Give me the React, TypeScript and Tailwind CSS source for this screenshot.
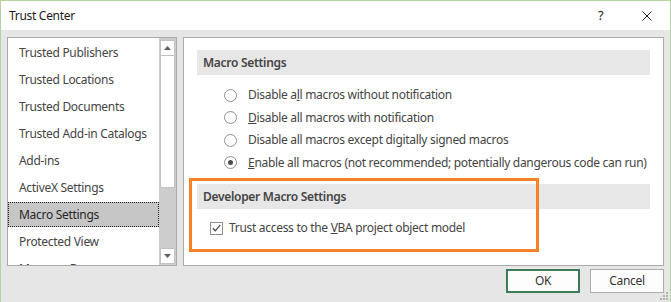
import React from "react";

const items = [
  "Trusted Publishers",
  "Trusted Locations",
  "Trusted Documents",
  "Trusted Add-in Catalogs",
  "Add-ins",
  "ActiveX Settings",
  "Macro Settings",
  "Protected View",
  "Message Bar",
];

function Radio({ checked }: { checked?: boolean }) {
  return (
    <span className="w-[13px] h-[13px] rounded-full border border-[#8f8f8f] bg-white flex items-center justify-center shrink-0">
      {checked && <span className="w-[5px] h-[5px] rounded-full bg-[#4d4d4d]" />}
    </span>
  );
}

function Tri({ down }: { down?: boolean }) {
  return (
    <svg width="7" height="4" viewBox="0 0 7 4">
      {down ? <path d="M0 0H7L3.5 4Z" fill="#606060" /> : <path d="M0 4H7L3.5 0Z" fill="#606060" />}
    </svg>
  );
}

export default function App() {
  return (
    <div className="relative w-[671px] h-[302px] flex flex-col overflow-hidden border-l border-r border-t border-[#b5d49d] bg-[#e6e6e6] text-[#444] font-['Noto_Sans',sans-serif] text-[12px] tracking-[-0.3px] leading-none whitespace-nowrap">
      {/* Title bar */}
      <div className="h-[29px] shrink-0 bg-white flex items-center pl-[8px] text-[#1a1a1a]">
        <span className="flex-1">Trust Center</span>
        <span className="w-[10px] text-[13px] mr-[34px]">?</span>
        <svg width="10" height="10" viewBox="0 0 10 10" className="mr-[18px]">
          <path d="M0.5 0.5L9.5 9.5M9.5 0.5L0.5 9.5" stroke="#1a1a1a" strokeWidth="1" />
        </svg>
      </div>

      {/* Body */}
      <div className="flex-1 flex flex-col px-[6px] pt-[7px]">
        <div className="flex gap-[6px] h-[229px]">
          {/* List */}
          <div className="w-[170px] border border-[#ababab] bg-white flex overflow-hidden">
            <div className="flex-1 pt-[1px] overflow-hidden">
              {items.map((it) => {
                const sel = it === "Macro Settings";
                return (
                  <div key={it} className="h-[27px] py-[1px]">
                    <div
                      className={
                        sel
                          ? "h-[25px] flex items-center pl-[10px] bg-[#c6c6c6] border border-dotted border-[#222] text-[#262626]"
                          : "h-[25px] flex items-center pl-[11px]"
                      }
                    >
                      {it}
                    </div>
                  </div>
                );
              })}
            </div>
            <div className="w-[17px] flex flex-col bg-[#cdcdcd] pt-[2px] pb-[1px] px-[1px]">
              <div className="h-[16px] bg-white border border-[#c2c2c2] flex items-center justify-center">
                <Tri />
              </div>
              <div className="h-[132px] bg-white border border-t-0 border-[#c2c2c2]" />
              <div className="flex-1" />
              <div className="h-[16px] bg-white border border-[#c2c2c2] flex items-center justify-center">
                <Tri down />
              </div>
            </div>
          </div>

          {/* Right panel */}
          <div className="flex-1 border border-[#ababab] bg-white pt-[12px] px-[13px]">
            <div className="h-[25px] bg-[#e7e7e7] flex items-center pl-[6px] font-semibold text-[#444]">
              Macro Settings
            </div>
            <div className="mt-[9px] flex flex-col">
              <div className="h-[22.5px] flex items-center pl-[27px] gap-[11px]">
                <Radio />
                <span>
                  Disable a<span className="underline">l</span>l macros without notification
                </span>
              </div>
              <div className="h-[22.5px] flex items-center pl-[27px] gap-[11px]">
                <Radio />
                <span>
                  <span className="underline">D</span>isable all macros with notification
                </span>
              </div>
              <div className="h-[22.5px] flex items-center pl-[27px] gap-[11px]">
                <Radio />
                <span>
                  Disable all macros except di<span className="underline">g</span>itally signed macros
                </span>
              </div>
              <div className="h-[22.5px] flex items-center pl-[27px] gap-[11px]">
                <Radio checked />
                <span>
                  <span className="underline">E</span>nable all macros (not recommended; potentially dangerous code can run)
                </span>
              </div>
            </div>
            <div className="mt-[10px] h-[25px] bg-[#e7e7e7] flex items-center pl-[6px] font-semibold text-[#444]">
              Developer Macro Settings
            </div>
            <div className="mt-[8px] h-[22px] flex items-center pl-[13px] gap-[6px]">
              <span className="w-[13px] h-[13px] border border-[#8f8f8f] bg-white flex items-center justify-center shrink-0">
                <svg width="9" height="8" viewBox="0 0 9 8">
                  <path d="M0.8 4.2L3.3 6.8L8.3 0.8" stroke="#4a4a4a" strokeWidth="1.3" fill="none" />
                </svg>
              </span>
              <span>
                Trust access to the <span className="underline">V</span>BA project object model
              </span>
            </div>
          </div>
        </div>

        {/* Buttons */}
        <div className="flex justify-end gap-[10px] mt-[3px]">
          <button className="w-[74px] h-[24px] border-2 border-[#3c7b57] bg-[#fdfdfd] text-[#333] flex items-center justify-center">
            OK
          </button>
          <button className="w-[74px] h-[24px] border border-[#adadad] bg-[#fdfdfd] text-[#333] flex items-center justify-center">
            Cancel
          </button>
        </div>
      </div>

      {/* Annotation */}
      <div className="absolute left-[188px] top-[177px] w-[350px] h-[74px] border-[3px] border-[#f7802b] pointer-events-none" />

      {/* Resize grip */}
      <svg width="9" height="9" viewBox="0 0 9 9" className="absolute right-[1px] bottom-[1px]">
        <rect x="6" y="0" width="2" height="2" fill="#b0b0b0" />
        <rect x="3" y="3" width="2" height="2" fill="#b0b0b0" />
        <rect x="6" y="3" width="2" height="2" fill="#b0b0b0" />
        <rect x="0" y="6" width="2" height="2" fill="#b0b0b0" />
        <rect x="3" y="6" width="2" height="2" fill="#b0b0b0" />
        <rect x="6" y="6" width="2" height="2" fill="#b0b0b0" />
      </svg>
    </div>
  );
}
